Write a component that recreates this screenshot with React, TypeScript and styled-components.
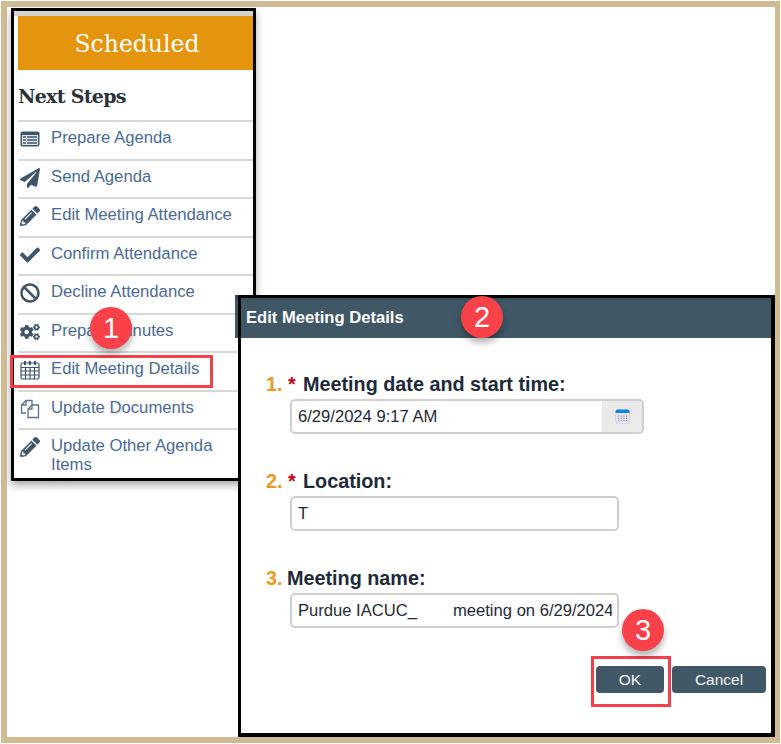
import React from 'react';
import styled, { createGlobalStyle } from 'styled-components';
import { FaPaperPlane, FaPencilAlt, FaCheck, FaBan, FaCogs } from 'react-icons/fa';

const Global = createGlobalStyle`
  html, body { margin: 0; padding: 0; background: #fff; }
  body { font-family: "Liberation Sans", Arial, sans-serif; }
`;

const Frame = styled.div`
  position: relative;
  box-sizing: border-box;
  width: 781px;
  height: 744px;
  border-style: solid;
  border-color: #d1bb92;
  border-width: 7px 6px 7px 7px;
  outline: 1px solid #fff;
  outline-offset: -1px;
  background: #fff;
  overflow: hidden;
`;

const SideWindow = styled.aside`
  position: absolute;
  left: 4px;
  top: 1px;
  width: 245px;
  height: 473px;
  box-sizing: border-box;
  border: 3px solid #000;
  background: #fff;
  padding: 5px 0 0 4px;
  box-shadow: 0 4px 8px rgba(0, 0, 0, 0.35);
  display: flex;
  flex-direction: column;
`;

const TopStrip = styled.div`
  position: absolute;
  left: 0;
  right: 0;
  top: 0;
  height: 5px;
  background: #d4d4d4;
`;

const StatusBanner = styled.div`
  flex: none;
  height: 54px;
  background: #e5950d;
  color: #fff;
  display: flex;
  align-items: center;
  justify-content: center;
  font-family: "DejaVu Serif", serif;
  font-size: 23.5px;
  padding: 2px 0 0 3px;
  box-sizing: border-box;
`;

const StepsTitle = styled.h2`
  flex: none;
  margin: 0;
  height: 50px;
  padding-top: 13px;
  box-sizing: border-box;
  font-family: "DejaVu Serif", serif;
  font-size: 19px;
  font-weight: 700;
  letter-spacing: -0.7px;
  color: #2b3238;
  line-height: 26px;
`;

const StepList = styled.ul`
  flex: none;
  list-style: none;
  margin: 0;
  padding: 0;
`;

const StepRow = styled.li`
  display: flex;
  align-items: flex-start;
  height: 38.5px;
  box-sizing: border-box;
  border-top: 2px solid #d8d8d8;
  padding-top: 6px;
  &:last-child { height: 50px; }
`;

const StepIcon = styled.span`
  flex: 0 0 33px;
  height: 22px;
  display: flex;
  align-items: center;
  padding-left: 2px;
  box-sizing: border-box;
  color: #3f566a;
  font-size: 20px;
`;

const StepLabel = styled.span`
  font-size: 16.7px;
  line-height: 19px;
  color: #4a6a97;
  width: 185px;
`;

const Dialog = styled.section`
  position: absolute;
  left: 231px;
  top: 288px;
  width: 537px;
  height: 442px;
  box-sizing: border-box;
  background: #fff;
  display: flex;
  flex-direction: column;
  &::after {
    content: '';
    position: absolute;
    inset: 0;
    border: 3px solid #000;
    border-right-width: 4px;
    border-bottom-width: 4px;
    pointer-events: none;
  }
`;

const DialogBar = styled.header`
  height: 43px;
  margin-left: -3px;
  padding: 3px 0 0 11px;
  box-sizing: border-box;
  background: #405766;
  box-shadow: inset 0 6px 3px -2px rgba(0, 0, 0, 0.18);
  color: #fff;
  font-size: 16.6px;
  font-weight: 700;
  display: flex;
  align-items: center;
`;

const DialogForm = styled.div`
  padding: 36px 0 0 28px;
  display: flex;
  flex-direction: column;
`;

const Field = styled.div`
  height: 97px;
`;

const FieldLabel = styled.div`
  font-size: 19.8px;
  font-weight: 700;
  line-height: 21px;
  color: #1e2a3a;
  display: flex;
  height: 21px;
  white-space: nowrap;
`;

const FieldNumber = styled.span`
  color: #ea9a25;
  width: 21px;
`;

const RequiredMark = styled.span`
  color: #c40018;
  width: 15px;
  margin-left: 1px;
`;

const InputShell = styled.div<{ $width: number }>`
  margin: 4px 0 0 24px;
  width: ${p => p.$width}px;
  height: 35px;
  box-sizing: border-box;
  border: 2px solid #cfcfcf;
  border-radius: 5px;
  background: #fff;
  display: flex;
  overflow: hidden;
`;

const InputText = styled.div`
  flex: 1;
  min-width: 0;
  margin: 0 5px 0 6px;
  font-size: 16.6px;
  line-height: 31px;
  color: #1f2a36;
  white-space: pre;
  overflow: hidden;
`;

const NameGap = styled.span`
  display: inline-block;
  width: 36px;
`;

const CalendarAddon = styled.div`
  flex: none;
  width: 40px;
  background: #eaeaea;
  display: flex;
  align-items: center;
  justify-content: center;
`;

const ButtonRow = styled.div`
  position: absolute;
  left: 358px;
  top: 371px;
  display: flex;
  gap: 8px;
`;

const ActionButton = styled.button<{ $width: number }>`
  width: ${p => p.$width}px;
  height: 27px;
  padding: 0;
  border: none;
  border-radius: 4px;
  background: #405766;
  color: #f2f5f7;
  font-family: "Liberation Sans", Arial, sans-serif;
  font-size: 15.5px;
`;

const Callout = styled.div<{ $x: number; $y: number }>`
  position: absolute;
  left: ${p => p.$x - 21}px;
  top: ${p => p.$y - 21}px;
  width: 42px;
  height: 42px;
  border-radius: 50%;
  background: #f9414a;
  color: #fff;
  font-size: 29px;
  display: flex;
  align-items: center;
  justify-content: center;
  box-shadow: 0 5px 7px rgba(0, 0, 0, 0.3);
  z-index: 3;
`;

const Highlight = styled.div<{ $x: number; $y: number; $w: number; $h: number }>`
  position: absolute;
  left: ${p => p.$x}px;
  top: ${p => p.$y}px;
  width: ${p => p.$w}px;
  height: ${p => p.$h}px;
  box-sizing: border-box;
  border: 3px solid #f4404a;
  z-index: 2;
`;

const AgendaIcon = () => (
  <svg width="20" height="16" viewBox="0 0 20 16">
    <rect x="0.5" y="0.5" width="19" height="15" rx="2" fill="#3f566a" />
    <rect x="2" y="4" width="16" height="10" fill="#dfe4e8" />
    <path d="M3 6h3M3 9h3M3 12h3M7 6h10M7 9h10M7 12h10" stroke="#3f566a" strokeWidth="1.4" />
  </svg>
);

const CalendarIcon = () => (
  <svg width="20" height="20" viewBox="0 0 20 20" fill="none" stroke="#3f566a" strokeWidth="1.2">
    <rect x="1" y="3" width="18" height="16" rx="1.5" />
    <path d="M1 7.5h18M1 11h18M1 15h18M5.5 7.5V19M10 7.5V19M14.5 7.5V19" />
    <path d="M5 1v4M10 1v4M15 1v4" strokeWidth="2" />
  </svg>
);

const DocsIcon = () => (
  <svg width="20" height="20" viewBox="0 0 20 20" fill="none" stroke="#5d7183" strokeWidth="1.3">
    <path d="M6 14H1.5V6L6 1.5h6V6" />
    <path d="M6 1.5V6H1.5" />
    <path d="M8 18.5V10l4-4h6.5v12.5z" fill="#fff" />
    <path d="M12 6v4H8" />
  </svg>
);

const SmallCalendar = () => (
  <svg width="15" height="15" viewBox="0 0 15 15">
    <rect x="0.5" y="0.5" width="14" height="14" rx="2" fill="#e6e1ee" stroke="#d4cfe0" strokeWidth="0.6" />
    <path d="M0.5 4V2.5a2 2 0 0 1 2-2h10a2 2 0 0 1 2 2V4z" fill="#0f86d8" />
    <path d="M3.5 6.5v6M6.2 6.5v6M8.9 6.5v6M11.6 6.5v6" stroke="#9a93b8" strokeWidth="1.2" strokeDasharray="1.2 1" />
  </svg>
);

const steps: { icon: React.ReactNode; label: string }[] = [
  { icon: <AgendaIcon />, label: 'Prepare Agenda' },
  { icon: <FaPaperPlane />, label: 'Send Agenda' },
  { icon: <FaPencilAlt />, label: 'Edit Meeting Attendance' },
  { icon: <FaCheck />, label: 'Confirm Attendance' },
  { icon: <FaBan />, label: 'Decline Attendance' },
  { icon: <FaCogs />, label: 'Prepare Minutes' },
  { icon: <CalendarIcon />, label: 'Edit Meeting Details' },
  { icon: <DocsIcon />, label: 'Update Documents' },
  { icon: <FaPencilAlt />, label: 'Update Other Agenda Items' },
];

export default function App() {
  return (
    <Frame>
      <Global />
      <SideWindow>
        <TopStrip />
        <StatusBanner>Scheduled</StatusBanner>
        <StepsTitle>Next Steps</StepsTitle>
        <StepList>
          {steps.map(s => (
            <StepRow key={s.label}>
              <StepIcon>{s.icon}</StepIcon>
              <StepLabel>{s.label}</StepLabel>
            </StepRow>
          ))}
        </StepList>
      </SideWindow>
      <Highlight $x={3} $y={348} $w={203} $h={33} />
      <Callout $x={104} $y={321}>1</Callout>
      <Dialog>
        <DialogBar>Edit Meeting Details</DialogBar>
        <DialogForm>
          <Field>
            <FieldLabel><FieldNumber>1.</FieldNumber><RequiredMark>*</RequiredMark>Meeting date and start time:</FieldLabel>
            <InputShell $width={354}>
              <InputText>6/29/2024 9:17 AM</InputText>
              <CalendarAddon><SmallCalendar /></CalendarAddon>
            </InputShell>
          </Field>
          <Field>
            <FieldLabel><FieldNumber>2.</FieldNumber><RequiredMark>*</RequiredMark>Location:</FieldLabel>
            <InputShell $width={329}>
              <InputText>T</InputText>
            </InputShell>
          </Field>
          <Field>
            <FieldLabel><FieldNumber>3.</FieldNumber>Meeting name:</FieldLabel>
            <InputShell $width={329}>
              <InputText>Purdue IACUC_<NameGap />meeting on 6/29/2024</InputText>
            </InputShell>
          </Field>
        </DialogForm>
        <ButtonRow>
          <ActionButton $width={68}>OK</ActionButton>
          <ActionButton $width={94}>Cancel</ActionButton>
        </ButtonRow>
      </Dialog>
      <Callout $x={475} $y={310}>2</Callout>
      <Highlight $x={584} $y={649} $w={80} $h={51} />
      <Callout $x={636} $y={623}>3</Callout>
    </Frame>
  );
}
